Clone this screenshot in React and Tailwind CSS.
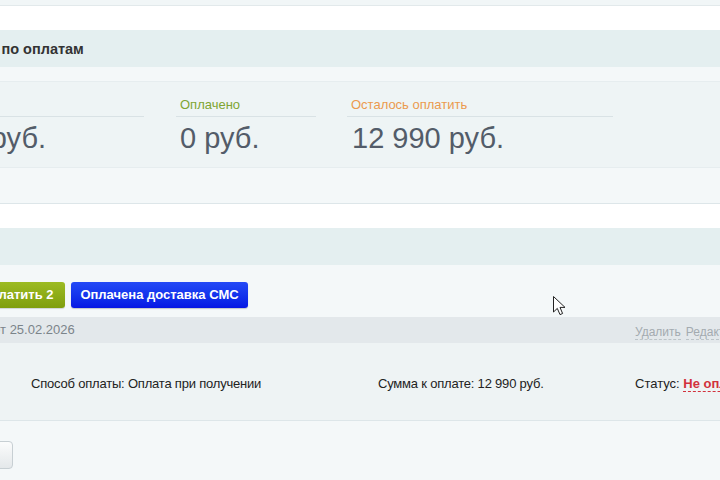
import React from "react";

function Cursor() {
  return (
    <svg className="absolute left-[553px] top-[296px]" width="13" height="20" viewBox="0 0 13 20">
      <path d="M0.5 0.5 L0.5 16 L4.3 12.4 L7 18.6 L9.6 17.5 L7 11.4 L12 11.4 Z" fill="#fff" stroke="#222" strokeWidth="1" strokeLinejoin="round" />
    </svg>
  );
}

export default function App() {
  return (
    <div className="relative w-[720px] h-[480px] overflow-hidden bg-[#f4f8f9] font-['Liberation_Sans',Arial,sans-serif]">
      <div className="h-[6px] bg-[#f1f6f7] border-b border-[#e2e9eb]" />
      <div className="h-[24px] bg-white" />
      <div className="h-[37px] bg-[#e4eff0] flex items-center pt-[2px]">
        <span className="ml-[-55px] text-[14.5px] font-bold text-[#333]">Сводка по оплатам</span>
      </div>
      <div className="h-[14px]" />
      <div className="h-[87px] bg-[#eef4f5] border-y border-[#e6edef] flex">
        <div className="flex ml-[-110px] gap-[32px]">
          <div className="w-[254px] pt-[15px]">
            <div className="border-b border-[#d9e2e5] pl-[4px] pb-[3px] text-[13px] leading-[16px] text-[#535c69]">Сумма заказа</div>
            <div className="pl-[4px] mt-[5px] text-[29px] leading-[32px] text-[#535c69]">12 990 руб.</div>
          </div>
          <div className="w-[140px] pt-[15px]">
            <div className="border-b border-[#d9e2e5] pl-[4px] pb-[3px] text-[13px] leading-[16px] text-[#7fa532]">Оплачено</div>
            <div className="pl-[4px] mt-[5px] text-[29px] leading-[32px] text-[#535c69]">0 руб.</div>
          </div>
          <div className="w-[266px] ml-[-1px] pt-[15px]">
            <div className="border-b border-[#d9e2e5] pl-[4px] pb-[3px] text-[13px] leading-[16px] text-[#eb9a4e]">Осталось оплатить</div>
            <div className="pl-[5px] mt-[5px] text-[29px] leading-[32px] text-[#535c69]">12 990 руб.</div>
          </div>
        </div>
      </div>
      <div className="h-[36px] border-b border-[#dde6e9]" />
      <div className="h-[24px] bg-white" />
      <div className="h-[37px] bg-[#e4eff0]" />
      <div className="h-[52px] pt-[17px] flex">
        <div className="flex ml-[-31px] gap-[6px] h-[26px]">
          <button className="h-[26px] w-[96px] rounded-[3px] bg-gradient-to-b from-[#9cbb22] to-[#7f9e0c] text-white text-[13px] font-bold shadow-[0_1px_1px_rgba(0,0,0,0.15)]">Оплатить 2</button>
          <button className="h-[26px] w-[177px] rounded-[3px] bg-gradient-to-b from-[#2449f6] to-[#0816e4] text-white text-[13px] font-bold shadow-[0_1px_1px_rgba(0,0,0,0.2)]">Оплачена доставка СМС</button>
        </div>
      </div>
      <div className="h-[26px] bg-[#e3e8eb] flex items-center">
        <span className="ml-[-80px] w-[715px] shrink-0 text-[13px] text-[#7b848a]">Оплата №1 от 25.02.2026</span>
        <div className="flex gap-[5px] text-[12px] text-[#a3abb0] pt-[4px] shrink-0 whitespace-nowrap">
          <span className="border-b border-dashed border-[#bcc4c8] leading-[14px]">Удалить</span>
          <span className="border-b border-dashed border-[#bcc4c8] leading-[14px]">Редактировать</span>
        </div>
      </div>
      <div className="h-[78px] bg-[#eef3f4] border-b border-[#dde6e9] flex items-center text-[13px] text-[#222] pt-[4px]">
        <div className="pl-[31px] w-[378px] shrink-0 tracking-[-0.2px]">Способ оплаты: Оплата при получении</div>
        <div className="w-[257px] shrink-0 tracking-[-0.2px]">Сумма к оплате: 12 990 руб.</div>
        <div className="shrink-0 whitespace-nowrap">
          Статус: <span className="font-bold text-[#d2313c] border-b border-dashed border-[#d2313c]">Не оплачено</span>
        </div>
      </div>
      <div className="pt-[20px] flex">
        <button className="ml-[-100px] w-[113px] h-[28px] rounded-[4px] border border-[#c7cfd3] bg-gradient-to-b from-[#fbfcfc] to-[#e4e8ea] text-[13px] text-[#333]">Добавить</button>
      </div>
      <Cursor />
    </div>
  );
}
